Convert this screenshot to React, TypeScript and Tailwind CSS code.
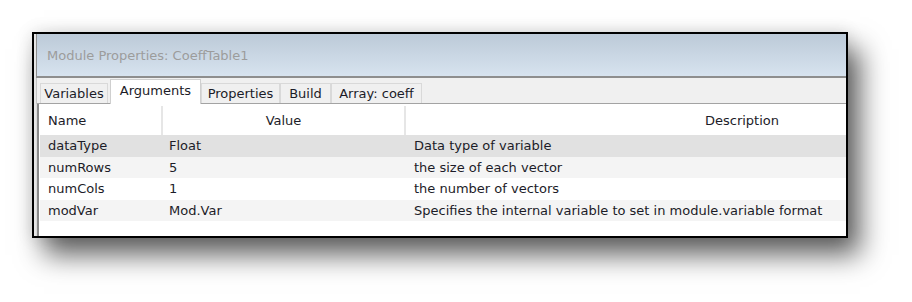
const font = { fontFamily: '"DejaVu Sans", sans-serif' };

const tabs = [
  { label: "Variables", active: false, w: "w-[68px]" },
  { label: "Arguments", active: true, w: "w-[91px]" },
  { label: "Properties", active: false, w: "w-[79px]" },
  { label: "Build", active: false, w: "w-[51px]" },
  { label: "Array: coeff", active: false, w: "w-[91px]" },
];

const rows = [
  { name: "dataType", value: "Float", desc: "Data type of variable", bg: "bg-[#e1e1e1]" },
  { name: "numRows", value: "5", desc: "the size of each vector", bg: "bg-[#f4f4f4]" },
  { name: "numCols", value: "1", desc: "the number of vectors", bg: "bg-white" },
  { name: "modVar", value: "Mod.Var", desc: "Specifies the internal variable to set in module.variable format", bg: "bg-[#f4f4f4]" },
];

export default function App() {
  return (
    <div className="w-[912px] h-[302px] bg-white pt-[32px] pl-[32px] overflow-hidden" style={font}>
      <div className="w-[816px] h-[206px] border-2 border-black bg-[#e6e6e6] pl-[2px] flex flex-col overflow-hidden shadow-[12px_17px_26px_rgba(0,0,0,0.62),0_0_16px_rgba(0,0,0,0.12)]">
        {/* Title bar */}
        <div className="h-[44px] shrink-0 border-l border-b-2 border-[#8e8e8e] bg-gradient-to-b from-[#bccad8] to-[#d7e3ef] flex items-center pl-[10px] pt-[2px]">
          <span className="text-[13px] text-[#9c9c9c]">Module Properties: CoeffTable1</span>
        </div>

        {/* Tab strip */}
        <div className="h-[26px] shrink-0 bg-[#f0f0f0] border-l border-[#c4c4c4] flex items-end pl-[3px] relative">
          <div className="absolute left-0 right-0 bottom-0 h-[1px] bg-[#a3a3a3]" />
          {tabs.map((t) =>
            t.active ? (
              <div
                key={t.label}
                className={`${t.w} h-[25px] ml-[2px] bg-white border-x border-t border-[#cfcfcf] relative z-10 flex items-center justify-center pb-[2px] text-[13px] text-[#1c1c28]`}
              >
                {t.label}
              </div>
            ) : (
              <div
                key={t.label}
                className={`${t.w} h-[20px] mb-[1px] bg-[#f0f0f0] border-x border-t border-[#d9d9d9] flex items-center justify-center pt-[1px] text-[13px] text-[#1c1c28]`}
              >
                {t.label}
              </div>
            )
          )}
        </div>

        {/* Grid */}
        <div className="flex-1 border-l border-[#dadada] flex">
          <div className="flex-1 border-l-2 border-[#8a8a8a] bg-white pl-[1px]">
            <div className="h-[31px] flex text-[13px] text-[#1c1c28] pt-[2px]">
              <div className="w-[121px] pl-[8px] flex items-center">Name</div>
              <div className="w-[2px] bg-[#e6e6e6]" />
              <div className="w-[241px] flex items-center justify-center">Value</div>
              <div className="w-[2px] bg-[#e6e6e6]" />
              <div className="w-[672px] flex items-center justify-center">Description</div>
            </div>
            {rows.map((r) => (
              <div key={r.name} className={`h-[21.5px] flex items-center text-[13px] text-[#1c1c28] ${r.bg}`}>
                <div className="w-[123px] pl-[8px]">{r.name}</div>
                <div className="w-[243px] pl-[6px]">{r.value}</div>
                <div className="pl-[8px] whitespace-nowrap">{r.desc}</div>
              </div>
            ))}
          </div>
        </div>
      </div>
    </div>
  );
}
